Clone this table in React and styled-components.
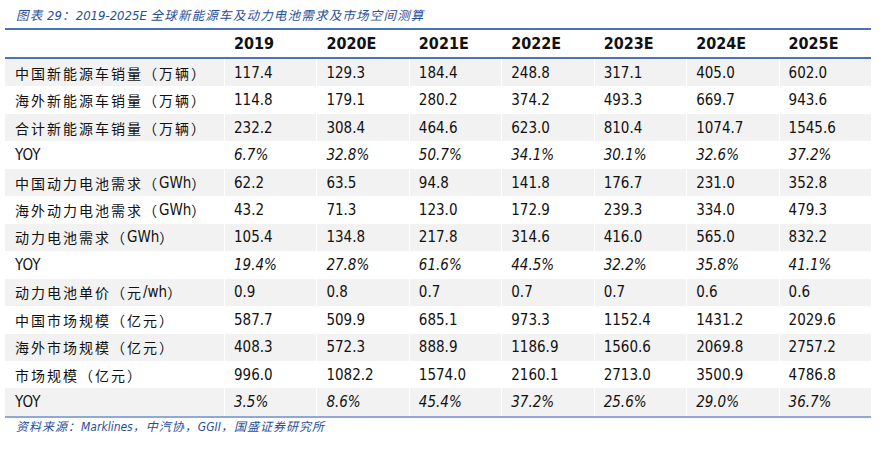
import React from 'react'
import styled, { createGlobalStyle } from 'styled-components'

const Global = createGlobalStyle`
  body {
    margin: 0;
    background: #fff;
  }
`

const latinFont = `"DejaVu Sans Condensed", "DejaVu Sans", sans-serif`
const cjkFont = `"Noto Sans CJK SC", sans-serif`

const Page = styled.div`
  width: 882px;
  height: 459px;
  padding: 5px 11px 0 5px;
  box-sizing: border-box;
  font-family: ${latinFont};
  font-stretch: condensed;
`

const Caption = styled.div`
  padding-left: 11px;
  height: 19px;
  line-height: 19px;
  font-size: 13px;
  font-style: italic;
  color: #1f4e9b;
  margin-bottom: 4px;
  white-space: nowrap;
`

// CJK run inside mixed text
const Han = styled.span`
  font-family: ${cjkFont};
  font-size: ${p => p.$size || '14px'};
  letter-spacing: ${p => p.$gap || '2px'};
`

const Table = styled.div`
  border-top: 2px solid #4a72b8;
  border-bottom: 2px solid #8ea9d8;
`

const Row = styled.div`
  display: grid;
  grid-template-columns: 219px repeat(7, 1fr);
  height: ${p => (p.$head ? '27px' : '27.46px')};
  background: ${p => (p.$shade ? '#f2f2f2' : '#fff')};
  border-bottom: ${p => (p.$head ? '2px solid #4a72b8' : 'none')};
`

const Cell = styled.div`
  display: flex;
  align-items: center;
  padding-left: ${p => (p.$label ? '10px' : '9px')};
  border-left: ${p => (p.$label ? 'none' : '1px solid #fff')};
  font-size: ${p => (p.$head ? '16px' : '15px')};
  font-weight: ${p => (p.$head ? 'bold' : 'normal')};
  font-style: ${p => (p.$italic ? 'italic' : 'normal')};
  color: #111;
  white-space: nowrap;
`

const Source = styled.div`
  padding-left: 11px;
  font-size: 12px;
  line-height: 15px;
  font-style: italic;
  color: #1f4e9b;
  white-space: nowrap;
`

// split a string into CJK / latin runs so each gets its own font
const Mixed = ({ text, size, gap }) =>
  text.split(/([\u3000-\u9fff\uff00-\uffef]+)/).map((part, i) =>
    /[\u3000-\u9fff\uff00-\uffef]/.test(part)
      ? <Han key={i} $size={size} $gap={gap}>{part}</Han>
      : <React.Fragment key={i}>{part}</React.Fragment>
  )

const years = ['2019', '2020E', '2021E', '2022E', '2023E', '2024E', '2025E']

const rows = [
  ['中国新能源车销量（万辆）', ['117.4', '129.3', '184.4', '248.8', '317.1', '405.0', '602.0']],
  ['海外新能源车销量（万辆）', ['114.8', '179.1', '280.2', '374.2', '493.3', '669.7', '943.6']],
  ['合计新能源车销量（万辆）', ['232.2', '308.4', '464.6', '623.0', '810.4', '1074.7', '1545.6']],
  ['YOY', ['6.7%', '32.8%', '50.7%', '34.1%', '30.1%', '32.6%', '37.2%'], true],
  ['中国动力电池需求（GWh）', ['62.2', '63.5', '94.8', '141.8', '176.7', '231.0', '352.8']],
  ['海外动力电池需求（GWh）', ['43.2', '71.3', '123.0', '172.9', '239.3', '334.0', '479.3']],
  ['动力电池需求（GWh）', ['105.4', '134.8', '217.8', '314.6', '416.0', '565.0', '832.2']],
  ['YOY', ['19.4%', '27.8%', '61.6%', '44.5%', '32.2%', '35.8%', '41.1%'], true],
  ['动力电池单价（元/wh）', ['0.9', '0.8', '0.7', '0.7', '0.7', '0.6', '0.6']],
  ['中国市场规模（亿元）', ['587.7', '509.9', '685.1', '973.3', '1152.4', '1431.2', '2029.6']],
  ['海外市场规模（亿元）', ['408.3', '572.3', '888.9', '1186.9', '1560.6', '2069.8', '2757.2']],
  ['市场规模（亿元）', ['996.0', '1082.2', '1574.0', '2160.1', '2713.0', '3500.9', '4786.8']],
  ['YOY', ['3.5%', '8.6%', '45.4%', '37.2%', '25.6%', '29.0%', '36.7%'], true],
]

const App = () => {
  return (
    <Page>
      <Global />
      <Caption>
        <Mixed text="图表 29：2019-2025E 全球新能源车及动力电池需求及市场空间测算" size="12.5px" gap="1.2px" />
      </Caption>
      <Table>
        <Row $head>
          <Cell $label $head></Cell>
          {years.map(y => (
            <Cell key={y} $head>{y}</Cell>
          ))}
        </Row>
        {rows.map(([label, vals, pct], i) => (
          <Row key={i} $shade={i % 2 === 0}>
            <Cell $label><Mixed text={label} /></Cell>
            {vals.map((v, j) => (
              <Cell key={j} $italic={pct}>{v}</Cell>
            ))}
          </Row>
        ))}
      </Table>
      <Source>
        <Mixed text="资料来源：Marklines，中汽协，GGII，国盛证券研究所" size="12px" gap="1px" />
      </Source>
    </Page>
  )
}

export default App
